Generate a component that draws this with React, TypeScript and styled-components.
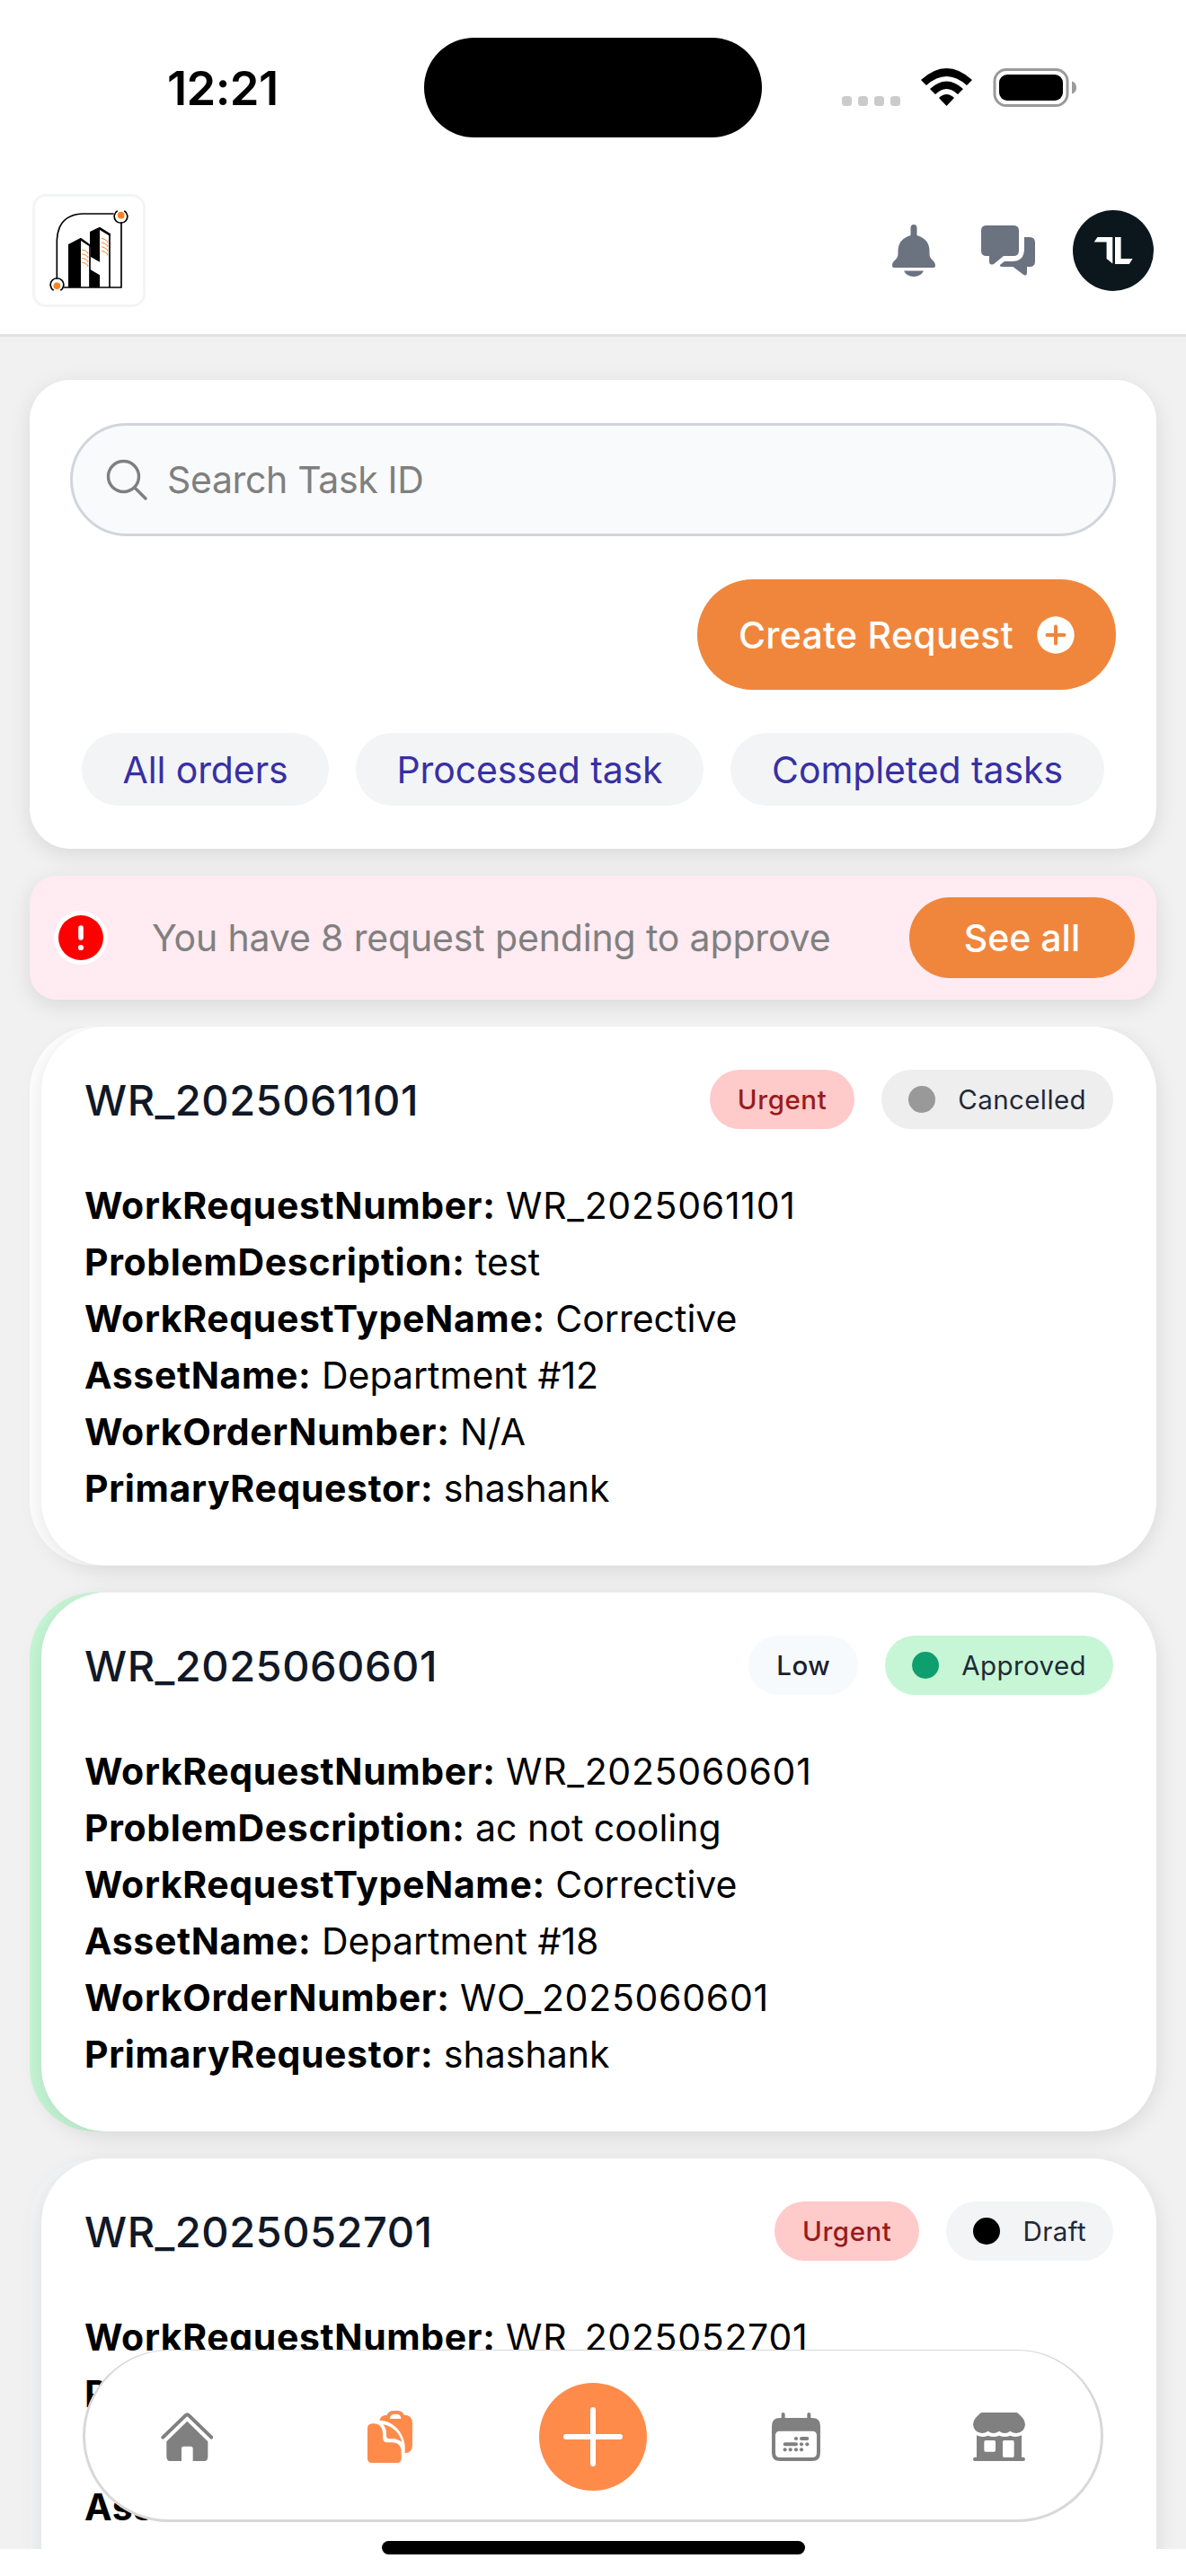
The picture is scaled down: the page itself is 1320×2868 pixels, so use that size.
import React from "react";
import styled, { createGlobalStyle } from "styled-components";

const GlobalStyle = createGlobalStyle`
  * { box-sizing: border-box; }
  body { margin: 0; background: #fff; }
  svg { display: block; flex: none; }
`;

const Screen = styled.div`
  position: relative;
  display: flex;
  flex-direction: column;
  width: 1320px;
  height: 2868px;
  overflow: hidden;
  background: #fff;
  font-family: Inter, "Liberation Sans", sans-serif;
  color: #000;
`;

const StatusBar = styled.div`
  display: flex;
  align-items: center;
  height: 195px;
  flex: none;
`;

const Clock = styled.div`
  width: 472px;
  padding-left: 186px;
  font-size: 52.5px;
  font-weight: 600;
  letter-spacing: -0.6px;
  white-space: nowrap;
`;

const Island = styled.div`
  width: 376px;
  height: 111px;
  border-radius: 56px;
  background: #000;
`;

const Signals = styled.div`
  display: flex;
  align-items: center;
  margin-left: 89px;
`;

const Header = styled.header`
  display: flex;
  align-items: center;
  justify-content: space-between;
  height: 180px;
  flex: none;
  padding: 0 36px 9px;
  border-bottom: 3px solid #e2e2e2;
`;

const LogoBox = styled.div`
  display: flex;
  align-items: center;
  justify-content: center;
  width: 126px;
  height: 126px;
  border: 3px solid #f3f4f6;
  border-radius: 15px;
`;

const HeaderActions = styled.div`
  display: flex;
  align-items: center;
  gap: 42px;
`;

const IconPair = styled.div`
  display: flex;
  align-items: center;
  gap: 51px;
`;

const Avatar = styled.div`
  display: flex;
  align-items: center;
  justify-content: center;
  width: 90px;
  height: 90px;
  border-radius: 50%;
  background: #0c171d;
`;

const Content = styled.main`
  display: flex;
  flex-direction: column;
  height: 2463px;
  flex: none;
  padding-top: 48px;
  overflow: hidden;
  background: #f1f1f1;
`;

const Panel = styled.section`
  display: flex;
  flex-direction: column;
  height: 522px;
  flex: none;
  margin: 0 33px;
  padding: 48px 45px;
  border-radius: 45px;
  background: #fff;
  box-shadow: 0 6px 24px rgba(0, 0, 0, 0.1);
`;

const SearchField = styled.div`
  display: flex;
  align-items: center;
  gap: 22px;
  height: 126px;
  padding-left: 37px;
  border: 3px solid #d1d5db;
  border-radius: 63px;
  background: #f9fafb;
  color: #7f7f7f;
  font-size: 41px;
  letter-spacing: -0.35px;
`;

const CreateButton = styled.button`
  display: flex;
  align-items: center;
  justify-content: space-between;
  align-self: flex-end;
  width: 466px;
  height: 123px;
  margin-top: 48px;
  padding: 0 46px;
  border: 0;
  border-radius: 62px;
  background: #f0863c;
  color: #fff;
  font: 500 41px Inter, sans-serif;
  letter-spacing: 0.3px;
  white-space: nowrap;
`;

const Chips = styled.div`
  display: flex;
  gap: 30px;
  margin: 48px 13px 0;
`;

const Chip = styled.div<{ $w: number }>`
  display: flex;
  align-items: center;
  justify-content: center;
  width: ${(p) => p.$w}px;
  height: 81px;
  border-radius: 41px;
  background: #f3f4f6;
  color: #3730a3;
  font-size: 41px;
  letter-spacing: -0.1px;
  white-space: nowrap;
`;

const Alert = styled.section`
  display: flex;
  align-items: center;
  height: 138px;
  flex: none;
  margin: 30px 33px 0;
  padding: 0 24px 0 27px;
  border-radius: 30px;
  background: #ffebf1;
  box-shadow: 0 6px 24px rgba(0, 0, 0, 0.1);
`;

const AlertText = styled.div`
  flex: 1;
  padding-left: 49px;
  color: #808080;
  font-size: 41px;
  letter-spacing: -0.15px;
  white-space: nowrap;
`;

const SeeAll = styled.button`
  width: 251px;
  height: 90px;
  padding: 0;
  border: 0;
  border-radius: 45px;
  background: #f0863c;
  color: #fff;
  font: 500 41px Inter, sans-serif;
`;

const List = styled.div`
  display: flex;
  flex-direction: column;
  gap: 30px;
  flex: 1;
  min-height: 0;
  margin-top: 30px;
  padding: 0 33px;
  overflow: hidden;
`;

const CardEdge = styled.article<{ $edge: string }>`
  flex: none;
  height: 600px;
  padding-left: 13px;
  border-radius: 72px;
  background: ${(p) => p.$edge};
`;

const CardBody = styled.div`
  height: 600px;
  padding: 48px;
  border-radius: 72px;
  background: #fff;
  box-shadow: 0 6px 24px rgba(0, 0, 0, 0.1);
`;

const CardTop = styled.div`
  display: flex;
  align-items: center;
  height: 66px;
  gap: 30px;
  margin-bottom: 54px;
`;

const CardTitle = styled.div`
  flex: 1;
  color: #111827;
  font-size: 47px;
  font-weight: 500;
  letter-spacing: 0.5px;
  white-space: nowrap;
`;

const Badge = styled.div<{ $bg: string; $fg: string; $strong?: boolean }>`
  display: flex;
  align-items: center;
  height: 66px;
  padding: 0 ${(p) => (p.$strong ? 31 : 30)}px;
  border-radius: 33px;
  background: ${(p) => p.$bg};
  color: ${(p) => p.$fg};
  font-size: 29.5px;
  font-weight: ${(p) => (p.$strong ? 500 : 400)};
  letter-spacing: ${(p) => (p.$strong ? 0.55 : 0.4)}px;
  white-space: nowrap;
`;

const Dot = styled.span<{ $color: string }>`
  width: 30px;
  height: 30px;
  margin-right: 25px;
  border-radius: 50%;
  background: ${(p) => p.$color};
`;

const Field = styled.div`
  height: 63px;
  line-height: 63px;
  font-size: 41px;
  white-space: nowrap;
`;

const Label = styled.span`
  font-weight: 700;
  letter-spacing: 0.62px;
`;

const Value = styled.span<{ $code: boolean }>`
  letter-spacing: ${(p) => (p.$code ? 0.7 : 0)}px;
`;

const NavBar = styled.nav`
  position: absolute;
  left: 92px;
  bottom: 60px;
  display: grid;
  grid-template-columns: repeat(5, 1fr);
  align-items: center;
  justify-items: center;
  width: 1136px;
  height: 192px;
  padding-top: 4px;
  border: 3px solid #d8d8d8;
  border-top-width: 1px;
  border-radius: 96px;
  background: #fff;
`;

const AddButton = styled.div`
  display: flex;
  align-items: center;
  justify-content: center;
  width: 120px;
  height: 120px;
  border-radius: 50%;
  background: #ff8b4a;
`;

const HomeIndicator = styled.div`
  position: absolute;
  left: 425px;
  bottom: 24px;
  width: 471px;
  height: 15px;
  border-radius: 8px;
  background: #000;
`;

const SignalIcons = () => (
  <svg width="262" height="46" viewBox="937 74 262 46">
    {[937, 955, 973, 991].map((x) => (
      <rect key={x} x={x} y="106" width="11" height="11" rx="3.5" fill="#cbcbcb" />
    ))}
    <path d="M1025 88Q1053.500 62 1082 88L1076 94Q1053.500 74 1031 94Z" />
    <path d="M1035 98Q1053.500 81 1072 98L1066 104Q1053.500 92 1041 104Z" />
    <path d="M1045 108Q1053.500 100 1062 108L1053.500 117Z" />
    <rect x="1107" y="76.500" width="81" height="40" rx="13" fill="none" stroke="#9a9a9a" strokeWidth="3" />
    <rect x="1112" y="82" width="71" height="29" rx="9" />
    <path d="M1193 89.500Q1198 91 1198 96.500Q1198 102 1193 103.500Z" fill="#9a9a9a" />
  </svg>
);

const windowMarks = [0, 14, 28, 42];

const BrandLogo = () => (
  <svg width="92" height="92" viewBox="69 69 276 276">
    <g fill="none" stroke="#000" strokeWidth="5">
      <path d="M100 302V172Q104 88 184 84H290M315 112V330H122" />
      <path d="M302 74A22 22 0 1 0 325 74M89 340A22 22 0 1 1 112 340" />
      <path d="M276 152V330M210 190V330" />
    </g>
    <circle cx="314" cy="89" r="11.500" fill="#ff8020" />
    <circle cx="100" cy="325" r="11.500" fill="#ff8020" />
    <path d="M138 186L180 164L210 186V144L243 128L279 151V160L243 138V245L213 228V196L180 174V330H138Z" />
    <path d="M210 269L243 289V330H210Z" />
    <g stroke="#ff8020" strokeWidth="3" fill="none">
      {windowMarks.map((y) => (
        <path key={y} d={`M184 ${205 + y}L192 ${206 + y}L203 ${213 + y}V${218 + y}`} />
      ))}
      {windowMarks.map((y) => (
        <path key={y} d={`M249 ${166 + y}L258 ${169 + y}L269 ${176 + y}V${181 + y}`} />
      ))}
    </g>
  </svg>
);

const BellIcon = () => (
  <svg width="48" height="58" viewBox="993 250 48 58" fill="#6b7280">
    <path d="M1013.500 262V254Q1013.500 250 1017 250Q1020.500 250 1020.500 254V262Q1034.500 266 1034.500 280V283C1034.500 289 1041 290 1041 295.500Q1041 298 1039 298H995Q993 298 993 295.500C993 290 999.500 289 999.500 283V280Q999.500 266 1013.500 262Z" />
    <path d="M1006 301.500H1028Q1025 308 1017 308Q1009 308 1006 301.500Z" />
  </svg>
);

const ChatIcon = () => (
  <svg width="60" height="57" viewBox="1092 251 60 57" fill="#6b7280">
    <path d="M1098 251H1128Q1134 251 1134 257V279Q1134 285 1128 285H1117L1106 294Q1101 296 1101 291V285H1098Q1092 285 1092 279V257Q1092 251 1098 251Z" />
    <path d="M1140 264H1146Q1152 264 1152 270V291Q1152 297 1146 297H1143V303Q1143 309 1138 305L1127.500 297H1116Q1111 297 1114 294L1118 291H1126Q1140 291 1140 277Z" />
  </svg>
);

const AvatarMark = () => (
  <svg width="44" height="32" viewBox="1217 264 44 32" fill="#fff">
    <path d="M1217.700 270.500L1221.500 265H1238.300V294.500L1231.600 289V270.500Z" />
    <path d="M1241 265H1247.600V289H1260.600L1256.800 295H1241Z" />
  </svg>
);

const SearchIcon = () => (
  <svg width="46" height="46" viewBox="118 511 46 46" fill="none" stroke="#7f7f7f" strokeWidth="3.4" strokeLinecap="round">
    <circle cx="137.500" cy="530.500" r="17" />
    <path d="M150 543L162 555" />
  </svg>
);

const PlusCircleIcon = () => (
  <svg width="42" height="42" viewBox="0 0 42 42">
    <circle cx="21" cy="21" r="20.700" fill="#fff" />
    <path d="M21 11.500V30.500M11.500 21H30.500" stroke="#f0863c" strokeWidth="4" strokeLinecap="round" />
  </svg>
);

const WarningIcon = () => (
  <svg width="60" height="60" viewBox="0 0 60 60">
    <circle cx="30" cy="30" r="30" fill="#fff" />
    <circle cx="30" cy="30" r="25" fill="#f00" />
    <path d="M30 19V30" stroke="#fff" strokeWidth="5.600" strokeLinecap="round" />
    <circle cx="30" cy="41" r="3.100" fill="#fff" />
  </svg>
);

const HomeIcon = () => (
  <svg width="58.700" height="54.700" viewBox="26 106 176 164" fill="#808080">
    <path d="M33 189L108 116Q114 110 120 116L195 189" fill="none" stroke="#808080" strokeWidth="12" strokeLinecap="round" />
    <path d="M114 135L183 203V252Q183 270 165 270H133V226Q133 219 126 219H102Q95 219 95 226V270H63Q45 270 45 252V203Z" />
  </svg>
);

const ClipboardIcon = () => (
  <svg width="50" height="58" viewBox="717 102 150 174" fill="#ff8b4a">
    <path d="M733 145C756 143 768 158 768 178V192Q768 208 784 208H798Q830 208 830 242V262Q830 276 816 276H731Q717 276 717 262V160Q717 146 733 145Z" />
    <path d="M769 148C802 155 824 175 832 207Q818 196 800 195H790Q780 195 780 185V178Q780 160 769 148Z" />
    <path
      fillRule="evenodd"
      d="M757 134Q761 116 782 116Q788 102 803 102H818Q833 102 839 116Q867 116 867 143V216Q867 242 842 244V220C838 173 803 136 757 134ZM792 129H829Q829 113 811 113Q792 113 792 129Z"
    />
  </svg>
);

const CalendarIcon = () => (
  <svg width="54" height="54" viewBox="57 108 162 162" fill="#808080">
    <path fillRule="evenodd" d="M84 126H192Q219 126 219 153V243Q219 270 192 270H84Q57 270 57 243V153Q57 126 84 126ZM84 170Q69 170 69 184V243Q69 258 84 258H192Q207 258 207 243V184Q207 170 192 170Z" />
    <g stroke="#808080" strokeWidth="12" strokeLinecap="round">
      <path d="M95 114V132M181 114V132M156 195H175M101 214H138" />
    </g>
    {[[138, 195], [156, 214], [175, 214], [101, 232], [119, 232], [138, 232], [156, 232]].map(([x, y]) => (
      <circle key={`${x}-${y}`} cx={x} cy={y} r="6.200" />
    ))}
  </svg>
);

const StoreIcon = () => (
  <svg width="58" height="54" viewBox="726 108 174 162" fill="#808080">
    <path d="M756 108H870Q875 108 879 113L891 125Q900 135 900 148Q898 175 871 177Q860 177 850 170Q841 177 832 177Q822 177 813 170Q804 177 794 177Q785 177 776 170Q766 177 756 177Q728 175 726 148Q726 135 735 125L747 113Q751 108 756 108Z" />
    <path
      fillRule="evenodd"
      d="M738 184Q757 193 776 185Q794 193 813 185Q832 193 850 185Q869 193 888 184V257H894Q900 258 900 264Q900 270 894 270H732Q726 270 726 264Q726 258 732 257H738ZM768 201Q763 201 763 206V234Q763 239 768 239H796Q801 239 801 234V206Q801 201 796 201ZM830 201Q825 201 825 206V253Q825 258 830 258H858Q863 258 863 253V206Q863 201 858 201Z"
    />
  </svg>
);

const AddIcon = () => (
  <svg width="68" height="68" viewBox="0 0 68 68" stroke="#fff" strokeWidth="6" strokeLinecap="round">
    <path d="M34 4V64M4 34H64" />
  </svg>
);

interface WorkRequest {
  id: string;
  edge: string;
  priority: { text: string; bg: string; fg: string };
  status: { text: string; bg: string; dot: string };
  fields: [string, string][];
}

const urgent = { text: "Urgent", bg: "#fecaca", fg: "#991b1b" };

const requests: WorkRequest[] = [
  {
    id: "WR_2025061101",
    edge: "#fefefe",
    priority: urgent,
    status: { text: "Cancelled", bg: "#eeeeee", dot: "#999999" },
    fields: [
      ["WorkRequestNumber", "WR_2025061101"],
      ["ProblemDescription", "test"],
      ["WorkRequestTypeName", "Corrective"],
      ["AssetName", "Department #12"],
      ["WorkOrderNumber", "N/A"],
      ["PrimaryRequestor", "shashank"],
    ],
  },
  {
    id: "WR_2025060601",
    edge: "#c6f6d5",
    priority: { text: "Low", bg: "#f7fafc", fg: "#1a202c" },
    status: { text: "Approved", bg: "#c6f6d5", dot: "#0f9f6e" },
    fields: [
      ["WorkRequestNumber", "WR_2025060601"],
      ["ProblemDescription", "ac not cooling"],
      ["WorkRequestTypeName", "Corrective"],
      ["AssetName", "Department #18"],
      ["WorkOrderNumber", "WO_2025060601"],
      ["PrimaryRequestor", "shashank"],
    ],
  },
  {
    id: "WR_2025052701",
    edge: "#f3f4f6",
    priority: urgent,
    status: { text: "Draft", bg: "#f3f4f6", dot: "#000000" },
    fields: [
      ["WorkRequestNumber", "WR_2025052701"],
      ["ProblemDescription", ""],
      ["WorkRequestTypeName", ""],
      ["AssetName", ""],
      ["WorkOrderNumber", ""],
    ],
  },
];

const RequestCard = ({ request }: { request: WorkRequest }) => (
  <CardEdge $edge={request.edge}>
    <CardBody>
      <CardTop>
        <CardTitle>{request.id}</CardTitle>
        <Badge $bg={request.priority.bg} $fg={request.priority.fg} $strong>
          {request.priority.text}
        </Badge>
        <Badge $bg={request.status.bg} $fg="#1f2937">
          <Dot $color={request.status.dot} />
          {request.status.text}
        </Badge>
      </CardTop>
      {request.fields.map(([label, value]) => (
        <Field key={label}>
          <Label>{label}:</Label> <Value $code={value.includes("_")}>{value}</Value>
        </Field>
      ))}
    </CardBody>
  </CardEdge>
);

export default function App() {
  return (
    <>
      <GlobalStyle />
      <Screen>
        <StatusBar>
          <Clock>12:21</Clock>
          <Island />
          <Signals>
            <SignalIcons />
          </Signals>
        </StatusBar>
        <Header>
          <LogoBox>
            <BrandLogo />
          </LogoBox>
          <HeaderActions>
            <IconPair>
              <BellIcon />
              <ChatIcon />
            </IconPair>
            <Avatar>
              <AvatarMark />
            </Avatar>
          </HeaderActions>
        </Header>
        <Content>
          <Panel>
            <SearchField>
              <SearchIcon />
              Search Task ID
            </SearchField>
            <CreateButton>
              Create Request
              <PlusCircleIcon />
            </CreateButton>
            <Chips>
              <Chip $w={275}>All orders</Chip>
              <Chip $w={387}>Processed task</Chip>
              <Chip $w={416}>Completed tasks</Chip>
            </Chips>
          </Panel>
          <Alert>
            <WarningIcon />
            <AlertText>You have 8 request pending to approve</AlertText>
            <SeeAll>See all</SeeAll>
          </Alert>
          <List>
            {requests.map((request) => (
              <RequestCard key={request.id} request={request} />
            ))}
          </List>
        </Content>
        <NavBar>
          <HomeIcon />
          <ClipboardIcon />
          <AddButton>
            <AddIcon />
          </AddButton>
          <CalendarIcon />
          <StoreIcon />
        </NavBar>
        <HomeIndicator />
      </Screen>
    </>
  );
}
